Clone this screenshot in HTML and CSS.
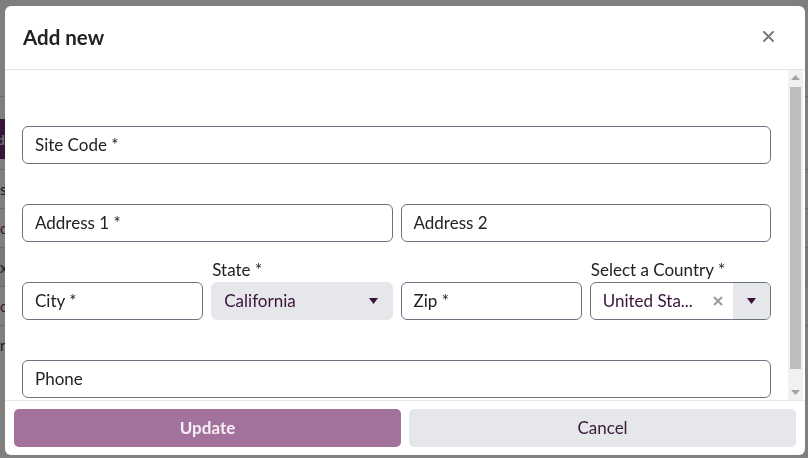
FILE: index.html
```html
<!DOCTYPE html>
<html lang="en">
<head>
<meta charset="utf-8">
<title>Add new</title>
<link rel="stylesheet" href="styles.css">
</head>
<body>
<div class="page">
  <div class="topbar"></div>
  <div class="toolbar"><button class="page-btn">d</button></div>
  <div class="table">
    <div class="trow">s</div>
    <div class="trow link">c</div>
    <div class="trow alt">x</div>
    <div class="trow link">c</div>
    <div class="trow">n</div>
  </div>
</div>
<div class="overlay">
  <div class="modal">
    <div class="modal-header">
      <h2 class="modal-title">Add new</h2>
      <button class="close-btn" aria-label="Close">
        <svg width="11" height="11" viewBox="0 0 11 11"><path d="M1 1L10 10M10 1L1 10" stroke="#7a7a7a" stroke-width="2" stroke-linecap="round"/></svg>
      </button>
    </div>
    <div class="modal-main">
      <div class="modal-body">
        <div class="form">
          <div class="row c1">
            <div class="field"><div class="lbl"></div><div class="ctl">Site Code *</div></div>
          </div>
          <div class="row c2">
            <div class="field"><div class="lbl"></div><div class="ctl">Address 1 *</div></div>
            <div class="field"><div class="lbl"></div><div class="ctl">Address 2</div></div>
          </div>
          <div class="row c4">
            <div class="field"><div class="lbl"></div><div class="ctl">City *</div></div>
            <div class="field"><div class="lbl">State *</div>
              <div class="ctl select">
                <span class="val">California</span>
                <svg class="caret" width="9" height="6" viewBox="0 0 9 6"><path d="M0 0H9L4.5 6Z" fill="#3b1239"/></svg>
              </div>
            </div>
            <div class="field"><div class="lbl"></div><div class="ctl">Zip *</div></div>
            <div class="field"><div class="lbl">Select a Country *</div>
              <div class="ctl combo">
                <span class="val">United Sta...</span>
                <svg class="clear" width="10" height="10" viewBox="0 0 10 10"><path d="M1 1L9 9M9 1L1 9" stroke="#9a9a9a" stroke-width="2"/></svg>
                <span class="combo-btn"><svg width="9" height="6" viewBox="0 0 9 6"><path d="M0 0H9L4.5 6Z" fill="#3b1239"/></svg></span>
              </div>
            </div>
          </div>
          <div class="row c1">
            <div class="field"><div class="lbl"></div><div class="ctl">Phone</div></div>
          </div>
        </div>
      </div>
      <div class="scrollbar" aria-hidden="true">
        <span class="sb-arrow"><svg width="9" height="5" viewBox="0 0 9 5"><path d="M0 5H9L4.5 0Z" fill="#a3a3a3"/></svg></span>
        <span class="sb-track"><span class="sb-thumb"></span></span>
        <span class="sb-arrow"><svg width="9" height="5" viewBox="0 0 9 5"><path d="M0 0H9L4.5 5Z" fill="#a3a3a3"/></svg></span>
      </div>
    </div>
    <div class="modal-footer">
      <button class="btn primary">Update</button>
      <button class="btn secondary">Cancel</button>
    </div>
  </div>
</div>
</body>
</html>
```
FILE: styles.css
```css
html, body {
  margin: 0;
  padding: 0;
  height: 100%;
  overflow: hidden;
  font-family: "Lato", "Liberation Sans", sans-serif;
}
.page {
  background: #ffffff;
  height: 100%;
}
.topbar {
  height: 96px;
  border-bottom: 1px solid #d6d6d6;
}
.toolbar {
  padding: 22px 0 0 0;
  height: 72px;
  box-sizing: border-box;
}
.page-btn {
  margin-left: -30px;
  height: 40px;
  width: 36px;
  border: 0;
  padding: 0 1px 0 0;
  background: #74296f;
  color: #ddd;
  font: 700 14px "Lato", sans-serif;
  text-align: right;
}
.trow {
  height: 38px;
  border-top: 1px solid #d0d0d0;
  font-size: 15px;
  line-height: 38px;
  color: #333;
}
.trow.link { color: #7a2b73; }
.trow.alt { background: #f2f2f2; }

.overlay {
  position: fixed;
  inset: 0;
  background: rgba(0, 0, 0, 0.5);
  padding: 6px 3px 3px 5px;
  box-sizing: border-box;
}
.modal {
  width: 800px;
  height: 449px;
  background: #fff;
  border-radius: 6px;
  display: flex;
  flex-direction: column;
  overflow: hidden;
}
.modal-header {
  height: 63px;
  flex: none;
  border-bottom: 1px solid #e4e4e4;
  display: flex;
  align-items: center;
  justify-content: space-between;
  padding: 0 25px 2px 18px;
  box-sizing: border-box;
  height: 64px;
}
.modal-title {
  margin: 0;
  font-size: 20.5px;
  font-weight: 700;
  color: #222;
}
.close-btn {
  border: 0;
  background: none;
  padding: 6px;
  display: flex;
  cursor: pointer;
}
.modal-main {
  flex: 1;
  min-height: 0;
  display: flex;
  padding-right: 2px;
}
.modal-body {
  flex: 1;
  min-width: 0;
  overflow: hidden;
}
.scrollbar {
  flex: none;
  width: 15px;
  background: #f1f1f1;
  display: flex;
  flex-direction: column;
}
.sb-arrow {
  height: 15px;
  flex: none;
  display: flex;
  align-items: center;
  justify-content: center;
}
.sb-track {
  flex: 1;
  padding: 2px 2px 16px;
  display: flex;
}
.sb-thumb {
  flex: 1;
  background: #bdbdbd;
}
.form {
  display: flex;
  flex-direction: column;
  gap: 20px;
  padding: 36px 17px 22px;
}
.row {
  display: grid;
  gap: 8px;
}
.row.c1 { grid-template-columns: 1fr; }
.row.c2 { grid-template-columns: 1fr 1fr; }
.row.c4 { grid-template-columns: repeat(4, 1fr); }
.field {
  display: flex;
  flex-direction: column;
  min-width: 0;
}
.lbl {
  height: 20px;
  font-size: 17px;
  line-height: 16px;
  padding-left: 1px;
  color: #222;
  white-space: nowrap;
}
.ctl {
  height: 38px;
  box-sizing: border-box;
  border: 1px solid #6b7280;
  border-radius: 6px;
  padding: 0 12px 1px;
  font-size: 17px;
  color: #222;
  display: flex;
  align-items: center;
  white-space: nowrap;
}
.ctl.select {
  background: #e5e7eb;
  border-color: #e5e7eb;
  color: #3b1239;
  justify-content: space-between;
  padding-right: 14px;
}
.ctl.combo {
  color: #3b1239;
  padding-right: 0;
  padding-bottom: 0;
  overflow: hidden;
}
.combo .val { flex: 1; padding-bottom: 1px; }
.combo .clear { margin-right: 10px; }
.combo-btn {
  width: 37px;
  height: 100%;
  background: #e5e7eb;
  display: flex;
  align-items: center;
  justify-content: center;
}
.modal-footer {
  flex: none;
  border-top: 1px solid #e8e8e8;
  display: grid;
  grid-template-columns: 1fr 1fr;
  gap: 8px;
  padding: 8px 9px 8px;
}
.btn {
  height: 38px;
  border: 0;
  border-radius: 5px;
  padding: 0 0 2px;
  font-family: "Lato", sans-serif;
  font-size: 17px;
}
.btn.primary {
  background: #a2719c;
  color: #f7eef6;
  font-weight: 700;
}
.btn.secondary {
  background: #e5e7eb;
  color: #3b1a39;
}
```
